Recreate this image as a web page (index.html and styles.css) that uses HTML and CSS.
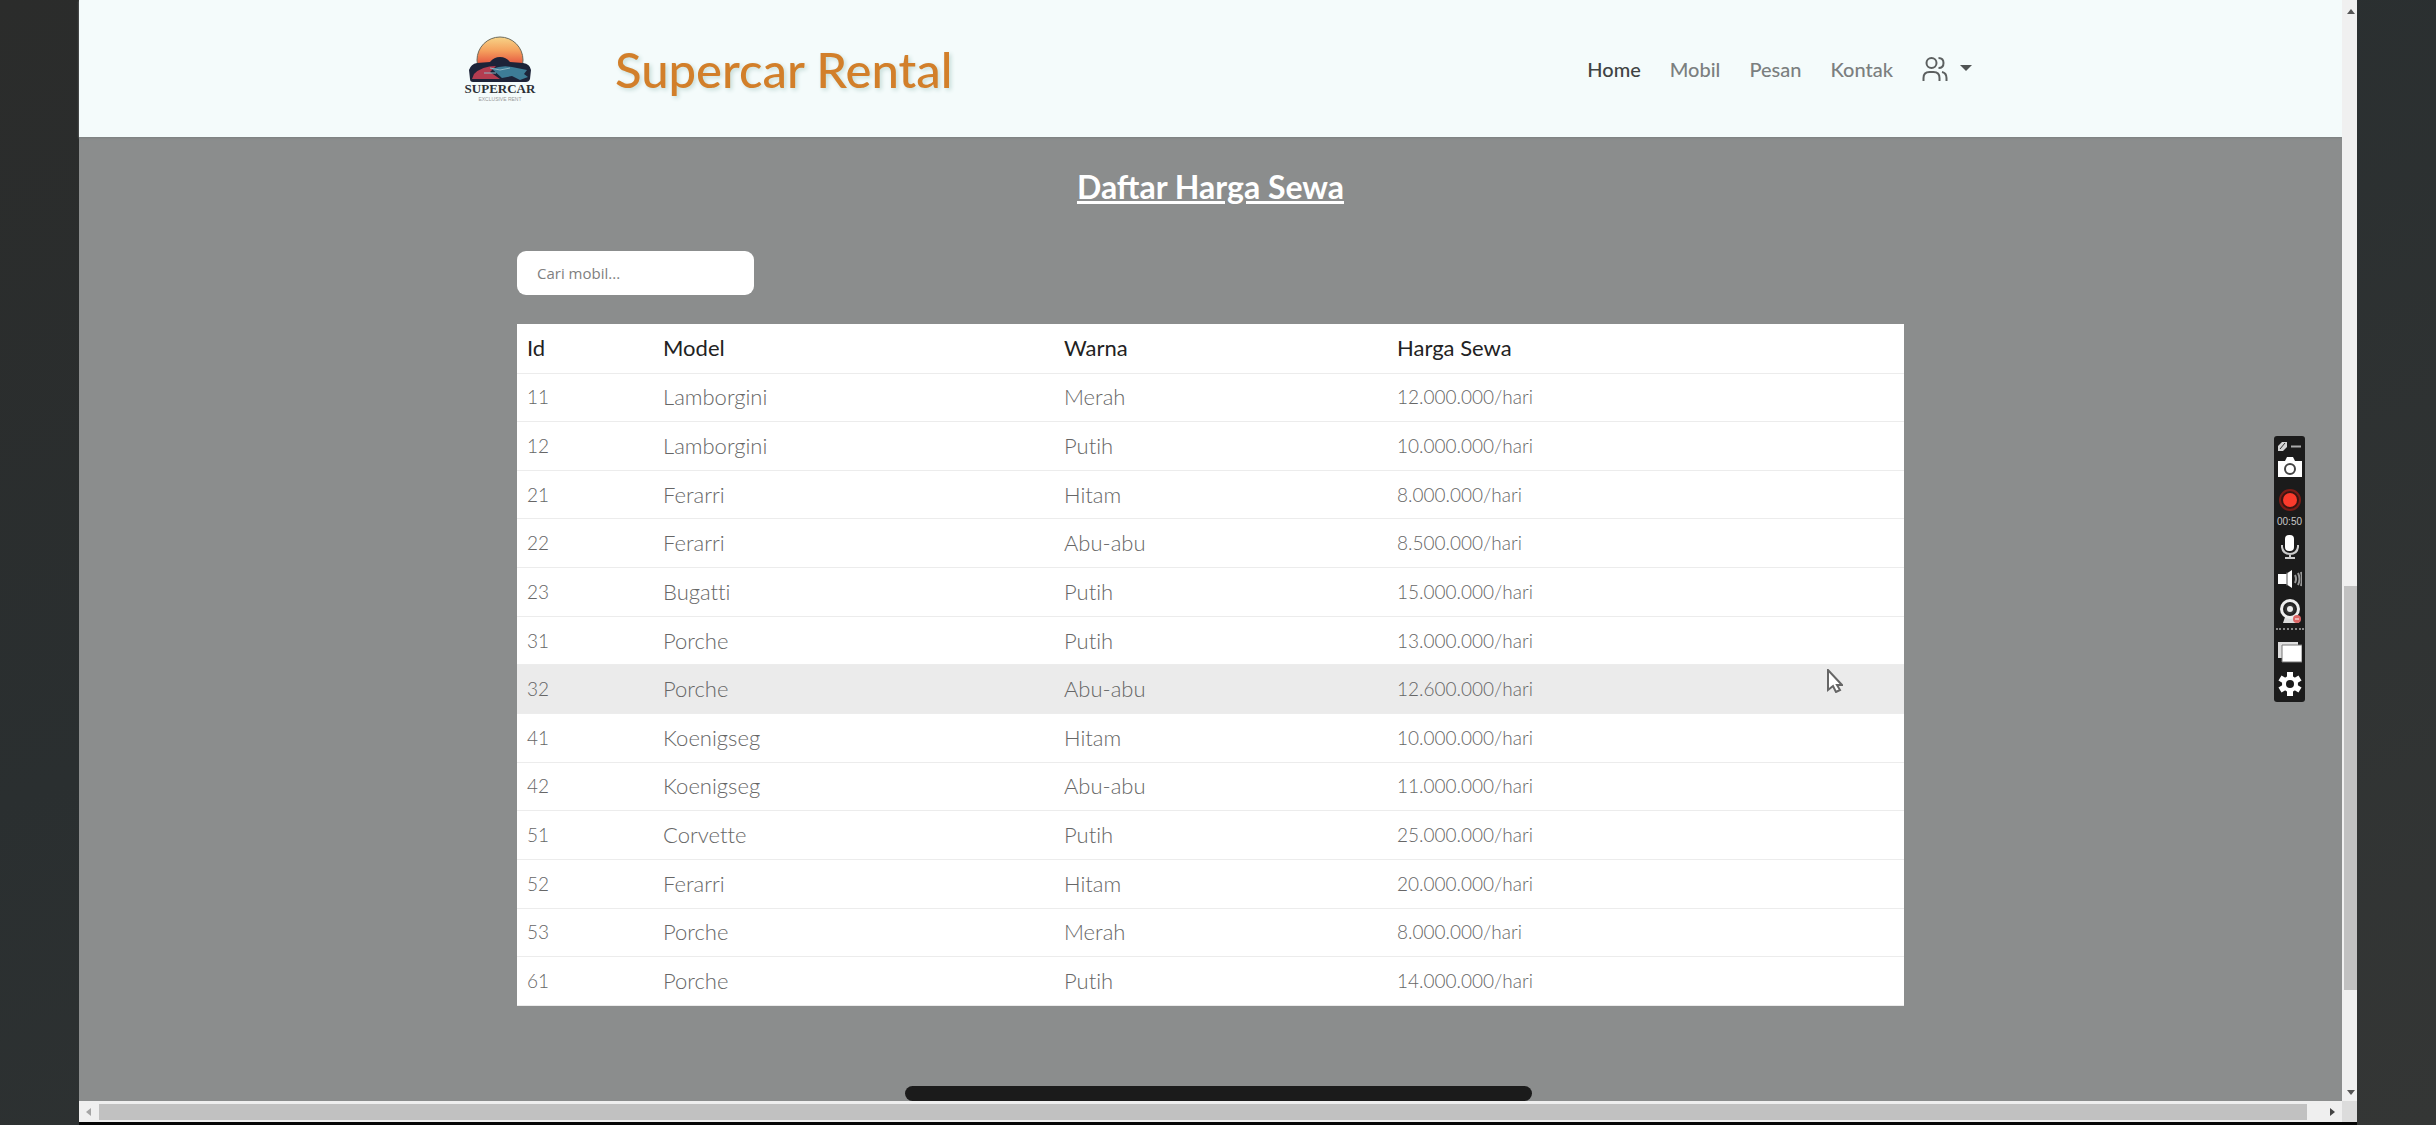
FILE: index.html
```html
<!DOCTYPE html>
<html lang="id">
<head>
<meta charset="utf-8">
<title>Supercar Rental</title>
<link rel="stylesheet" href="styles.css">
</head>
<body>
<div class="screen">
  <div class="page">
    <header class="header">
      <a class="brand" href="#" aria-label="Supercar">
        <svg class="brand-art" viewBox="0 0 72 46" aria-hidden="true">
          <defs><linearGradient id="sun" x1="0" y1="0" x2="0" y2="1"><stop offset="0" stop-color="#f7d488"/><stop offset=".3" stop-color="#f5a05d"/><stop offset=".6" stop-color="#e5533f"/><stop offset="1" stop-color="#8c2433"/></linearGradient></defs>
          <circle cx="36" cy="24" r="23" fill="url(#sun)" stroke="#6d6a5c"/>
          <path d="M5 34q2-6 8-7l13-1q4-5 10-5t10 5l13 1q7 1 8 7l-1 9q-1 3-4 3H9q-3 0-3-3z" fill="#1d2338"/>
          <path d="M10 38q8-8 22-8l-6 6 10 7H8z" fill="#b43c50"/>
          <path d="M28 33q10-4 20-2l15 3-3 4 4 3-8 3-8-4-10 2z" fill="#3d7c96"/>
          <path d="M26 32l10 2 10-2M20 37h12" stroke="#8fb6c4" fill="none"/>
        </svg>
        <span class="brand-name">SUPERCAR</span>
        <span class="brand-sub">EXCLUSIVE RENT</span>
      </a>
      <h1 class="title">Supercar Rental</h1>
      <nav class="nav">
        <a class="nav-link is-active" href="#">Home</a>
        <a class="nav-link" href="#">Mobil</a>
        <a class="nav-link" href="#">Pesan</a>
        <a class="nav-link" href="#">Kontak</a>
        <button class="account" type="button" aria-label="Akun">
          <svg width="26" height="26" viewBox="0 0 26 26" fill="none" stroke="#5c6060" stroke-width="2" aria-hidden="true"><circle cx="9.500" cy="7" r="5"/><path d="M1.500 25v-3q0-6 6-6h4q6 0 6 6v3M16.500 2q5 0 5 5t-5 5M20 16q4.500 1 4.500 6v3"/></svg>
          <svg width="12" height="7" viewBox="0 0 12 7" aria-hidden="true"><path d="M0 0h12L6 6z" fill="#505454"/></svg>
        </button>
      </nav>
    </header>
    <main class="content">
      <h2 class="heading">Daftar Harga Sewa</h2>
      <input class="search" type="search" placeholder="Cari mobil..." aria-label="Cari mobil">
      <table class="prices">
        <thead><tr><th class="col-id">Id</th><th class="col-model">Model</th><th class="col-color">Warna</th><th>Harga Sewa</th></tr></thead>
        <tbody>
          <tr><td>11</td><td>Lamborgini</td><td>Merah</td><td>12.000.000/hari</td></tr>
          <tr><td>12</td><td>Lamborgini</td><td>Putih</td><td>10.000.000/hari</td></tr>
          <tr><td>21</td><td>Ferarri</td><td>Hitam</td><td>8.000.000/hari</td></tr>
          <tr><td>22</td><td>Ferarri</td><td>Abu-abu</td><td>8.500.000/hari</td></tr>
          <tr><td>23</td><td>Bugatti</td><td>Putih</td><td>15.000.000/hari</td></tr>
          <tr><td>31</td><td>Porche</td><td>Putih</td><td>13.000.000/hari</td></tr>
          <tr class="is-hover"><td>32</td><td>Porche</td><td>Abu-abu</td><td>12.600.000/hari</td></tr>
          <tr><td>41</td><td>Koenigseg</td><td>Hitam</td><td>10.000.000/hari</td></tr>
          <tr><td>42</td><td>Koenigseg</td><td>Abu-abu</td><td>11.000.000/hari</td></tr>
          <tr><td>51</td><td>Corvette</td><td>Putih</td><td>25.000.000/hari</td></tr>
          <tr><td>52</td><td>Ferarri</td><td>Hitam</td><td>20.000.000/hari</td></tr>
          <tr><td>53</td><td>Porche</td><td>Merah</td><td>8.000.000/hari</td></tr>
          <tr><td>61</td><td>Porche</td><td>Putih</td><td>14.000.000/hari</td></tr>
        </tbody>
      </table>
    </main>
  </div>
  <div class="scroll-y" aria-hidden="true">
    <svg class="arrow" viewBox="0 0 8 5"><path d="M0 5L4 0l4 5z"/></svg>
    <div class="track-y"><div class="thumb-y"></div></div>
    <svg class="arrow" viewBox="0 0 8 5"><path d="M0 0h8L4 5z"/></svg>
  </div>
  <div class="scroll-x" aria-hidden="true">
    <svg class="arrow-x is-off" viewBox="0 0 5 8"><path d="M5 0v8L0 4z"/></svg>
    <div class="thumb-x"></div>
    <svg class="arrow-x" viewBox="0 0 5 8"><path d="M0 0v8l5-4z"/></svg>
  </div>
  <div class="corner"></div>
</div>
<aside class="recorder">
  <svg width="25" height="11" viewBox="0 0 25 11" aria-hidden="true"><path d="M1 5l4-4h5v5L6 10H1z" fill="#d5d5d5"/><path d="M3 8l5-6" stroke="#333"/><path d="M14 5.500h10" stroke="#aaa" stroke-width="2"/></svg>
  <button class="tool" type="button" aria-label="Foto"><svg viewBox="0 0 24 24"><path d="M0 5h7l2-4h6l2 4h7v16H0z" fill="#fff"/><circle cx="12" cy="13" r="5" fill="#fff" stroke="#444" stroke-width="2"/></svg></button>
  <button class="tool rec" type="button" aria-label="Rekam"><svg viewBox="0 0 24 24"><circle cx="12" cy="12" r="10" fill="#3a1512" stroke="#7b1d17" stroke-width="2"/><circle cx="12" cy="12" r="7" fill="#fb3b2c"/></svg></button>
  <span class="time">00:50</span>
  <button class="tool" type="button" aria-label="Mikrofon"><svg viewBox="0 0 24 24"><rect x="7" y="0" width="9" height="16" rx="4" fill="#fff"/><path d="M4 10v2q1 7 8 7t8-7v-2M12 19v3M7 23h10" fill="none" stroke="#ccc" stroke-width="2"/></svg></button>
  <button class="tool" type="button" aria-label="Suara"><svg viewBox="0 0 24 24"><path d="M0 7h8l6-4v18l-6-4H0z" fill="#fff"/><path d="M9 5v14" stroke="#555"/><path d="M17 8q2 4 0 8M20 6q3 6 0 12M23 5q2 7 0 14" fill="none" stroke="#999" stroke-width="2"/></svg></button>
  <button class="tool" type="button" aria-label="Kamera"><svg viewBox="0 0 24 24"><path d="M7 18h10l4 6H5z" fill="#ddd"/><circle cx="12" cy="10" r="10" fill="#eee"/><circle cx="12" cy="10" r="6" fill="#333" stroke="#222" stroke-width="2"/><circle cx="12" cy="10" r="3" fill="#eee"/><circle cx="19" cy="20" r="4" fill="#d66"/><path d="M17 20h4" stroke="#fff"/></svg></button>
  <div class="divider"></div>
  <button class="tool" type="button" aria-label="Galeri"><svg viewBox="0 0 24 24"><path d="M0 2h20v16H0z" fill="#ddd"/><path d="M4 5h20v17H4z" fill="#fff" stroke="#777"/></svg></button>
  <button class="tool" type="button" aria-label="Pengaturan"><svg viewBox="0 0 24 24"><g stroke="#fff" stroke-width="6"><path d="M12 0v24M2 6l20 12M2 18L22 6"/></g><circle cx="12" cy="12" r="8" fill="#fff"/><circle cx="12" cy="12" r="4" fill="#1b1b1b"/></svg></button>
</aside>
<svg class="cursor" viewBox="0 0 16 24" aria-hidden="true"><path d="M1 1v20l5-4 3 6 4-2-3-5h5z" fill="#fff" stroke="#666" stroke-width="2"/></svg>
<div class="home-bar"></div>
</body>
</html>
```
FILE: styles.css
```css
* { box-sizing: border-box; }

body {
  margin: 0;
  padding: 0 79px;
  min-height: 100vh;
  background: linear-gradient(160deg, #2b2c2b, #2a2f30 40%, #343635);
  font-family: Lato, sans-serif;
}

.screen {
  display: grid;
  grid-template-columns: minmax(0, 1fr) 15px;
  grid-template-rows: 1fr 21px;
  min-height: 100vh;
  border-bottom: 3px solid #050505;
}

.page { background: #8b8d8d; }

.header {
  display: flex;
  align-items: center;
  height: 137px;
  padding: 0 370px 0 385px;
  background: #f4fbfb;
  box-shadow: 0 1px 2px #7c8080;
}

.brand {
  display: flex;
  flex-direction: column;
  align-items: center;
  width: 72px;
  color: #2c3036;
  text-decoration: none;
}
.brand-art { width: 72px; height: 46px; }
.brand-name { font: bold 13px/14px "Liberation Serif", serif; }
.brand-sub { font: 5px/6px "Liberation Sans", sans-serif; color: #999; }

.title {
  margin: 0 auto 0 79px;
  font-size: 49px;
  line-height: 64px;
  font-weight: 500;
  color: #d27f2a;
  text-shadow: 2px 2px 4px #c5dcd8;
}

.nav { display: flex; align-items: center; gap: 29px; }
.nav-link { font-size: 20px; line-height: 32px; font-weight: 500; color: #7b7f7f; text-decoration: none; }
.nav-link.is-active { color: #3f4343; }
.account {
  display: flex;
  align-items: center;
  gap: 12px;
  padding: 0;
  border: 0;
  background: none;
}

.content { width: 1387px; max-width: 100%; margin: 0 auto; padding: 26px 0 95px; }

.heading {
  margin: 0 0 40px;
  font-size: 32px;
  line-height: 48px;
  text-align: center;
  text-decoration: underline;
  color: #fff;
}

.search {
  display: block;
  width: 237px;
  height: 44px;
  margin: 0 0 29px;
  padding: 0 20px;
  border: 0;
  border-radius: 9px;
  background: #fff;
  font: 15px "Open Sans", sans-serif;
}
.search::placeholder { color: #808080; opacity: 1; }

.prices {
  width: 100%;
  height: 682px;
  table-layout: fixed;
  border-collapse: collapse;
  background: #fff;
  font-size: 22px;
  line-height: 24px;
  font-variant-ligatures: none;
}
.prices th, .prices td {
  height: 48px;
  padding: 0 10px;
  text-align: left;
  border-bottom: 1px solid #ececec;
}
.prices th { height: 49px; font-weight: 400; color: #222; }
.prices td { font-weight: 300; color: #666; }
.prices td:first-child, .prices td:last-child { font-size: 19px; }
.prices .is-hover { background: #ebebeb; }
.col-id { width: 136px; }
.col-model { width: 401px; }
.col-color { width: 333px; }

.scroll-y {
  display: flex;
  flex-direction: column;
  align-items: center;
  justify-content: space-between;
  padding: 9px 0 6px 2px;
  background: #f0f0f0;
}
.arrow { width: 8px; height: 5px; fill: #555; }
.track-y { flex: 1; width: 100%; padding-top: 572px; }
.thumb-y { height: 404px; background: #c1c1c1; }

.scroll-x {
  display: flex;
  align-items: center;
  justify-content: space-between;
  padding: 2px 7px;
  background: #efefef;
}
.arrow-x { width: 5px; height: 8px; fill: #444; }
.arrow-x.is-off { fill: #a5a5a5; }
.thumb-x { flex: 1; height: 16px; margin: 0 23px 0 8px; background: #c1c1c1; }
.corner { background: #dcdcdc; }

.recorder {
  position: fixed;
  top: 436px;
  right: 131px;
  display: flex;
  flex-direction: column;
  align-items: center;
  width: 31px;
  padding: 5px 0 2px;
  border-radius: 3px;
  background: #1b1b1b;
}
.tool { width: 24px; height: 24px; margin: 4px 0; padding: 0; border: 0; background: none; }
.tool svg { display: block; width: 24px; height: 24px; }
.time { margin-bottom: 3px; font: 10px/12px "Liberation Sans", sans-serif; color: #c8c8c8; }
.divider { width: 28px; margin: 1px 0 6px; border-top: 2px dotted #888; }

.cursor { position: fixed; top: 669px; left: 1827px; width: 16px; height: 24px; }

.home-bar {
  position: fixed;
  bottom: 24px;
  left: 50%;
  width: 627px;
  height: 15px;
  margin-left: -313px;
  border-radius: 8px;
  background: #1b1b1b;
}
```
